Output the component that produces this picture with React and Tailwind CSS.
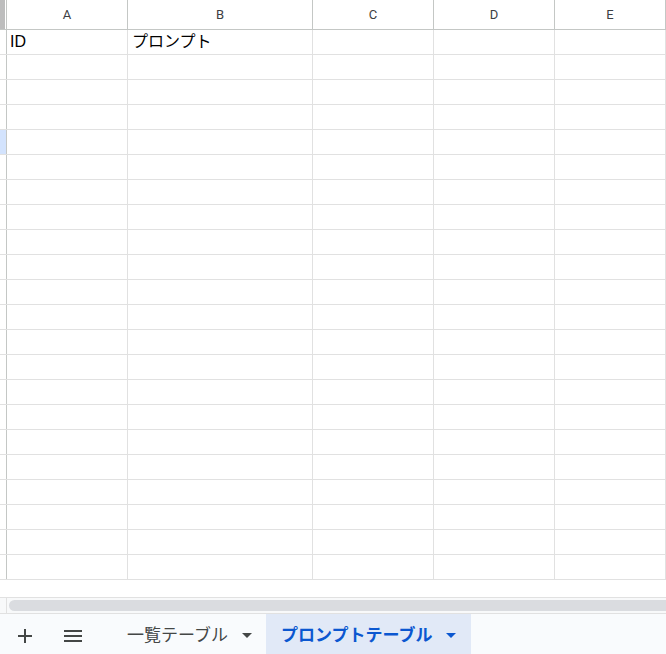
import React from 'react'

const COLS = [
  { key: 'A', w: 'w-[121px]' },
  { key: 'B', w: 'w-[185px]' },
  { key: 'C', w: 'w-[121px]' },
  { key: 'D', w: 'w-[121px]' },
  { key: 'E', w: 'flex-1' },
]

const ROWS = Array.from({ length: 22 }, (_, i) => i)

const Caret = ({ className }) => (
  <svg width="10" height="5" viewBox="0 0 10 5" className={className}>
    <path d="M0 0h10L5 5z" fill="currentColor" />
  </svg>
)

export default function App() {
  return (
    <div className="w-[666px] h-[654px] overflow-hidden bg-white flex flex-col font-['Roboto','Liberation_Sans','Noto_Sans_CJK_JP',sans-serif]">
      {/* column headers */}
      <div className="flex h-[30px] border-b border-[#c4c7c5] flex-shrink-0">
        <div className="w-[7px] border-r border-[#c4c7c5] bg-white flex">
          <div className="w-[5px] h-full bg-[#bdbdbd]" />
        </div>
        {COLS.map(({ key, w }) => (
          <div
            key={key}
            className={`${w} border-r border-[#c4c7c5] flex items-center justify-center text-[13px] text-[#3c4043]`}
          >
            {key}
          </div>
        ))}
      </div>

      {/* grid */}
      <div className="flex-1 overflow-hidden">
        {ROWS.map((r) => (
          <div key={r} className="flex h-[25px] border-b border-[#e1e1e1]">
            <div
              className={`w-[7px] border-r border-[#c4c7c5] ${r === 4 ? 'bg-[#d3e3fd]' : 'bg-white'}`}
            />
            {COLS.map(({ key, w }) => (
              <div
                key={key}
                className={`${w} border-r border-[#e1e1e1] flex items-end pl-[3px] pb-[2px] text-[16px] text-black leading-[20px] font-['Liberation_Sans','Noto_Sans_CJK_JP',sans-serif]`}
              >
                {r === 0 && key === 'A' && 'ID'}
                {r === 0 && key === 'B' && <span className="pl-[1px]">プロンプト</span>}
              </div>
            ))}
          </div>
        ))}
      </div>

      {/* horizontal scrollbar */}
      <div className="h-[16px] flex-shrink-0 flex border-t border-[#e1e1e1] bg-[#f8f9fa]">
        <div className="w-[7px] border-r border-[#e1e1e1]" />
        <div className="flex-1 pl-[2px] pt-[2px]">
          <div className="h-[11px] rounded-l-full bg-[#dadce0]" />
        </div>
      </div>

      {/* sheet tabs */}
      <div className="h-[41px] flex-shrink-0 flex items-stretch bg-[#f9fbfd] border-t border-[#e1e1e1] text-[17px]">
        <div className="w-[50px] flex items-center justify-center text-[#444746] pt-[3px]">
          <svg width="14" height="14" viewBox="0 0 14 14">
            <path d="M7 0v14M0 7h14" stroke="currentColor" strokeWidth="2" />
          </svg>
        </div>
        <div className="w-[46px] flex items-center justify-center text-[#444746] pt-[3px]">
          <svg width="18" height="12" viewBox="0 0 18 12">
            <path d="M0 1h18M0 6h18M0 11h18" stroke="currentColor" strokeWidth="2" />
          </svg>
        </div>
        <div className="flex items-center pl-[31px] pr-[14px] pt-[3px] text-[#444746] gap-[14px]">
          <span>一覧テーブル</span>
          <Caret />
        </div>
        <div className="flex items-center bg-[#e1e9f7] pl-[15px] pr-[15px] pt-[3px] gap-[14px] text-[#0b57d0] font-bold">
          <span>プロンプトテーブル</span>
          <Caret />
        </div>
      </div>
    </div>
  )
}
